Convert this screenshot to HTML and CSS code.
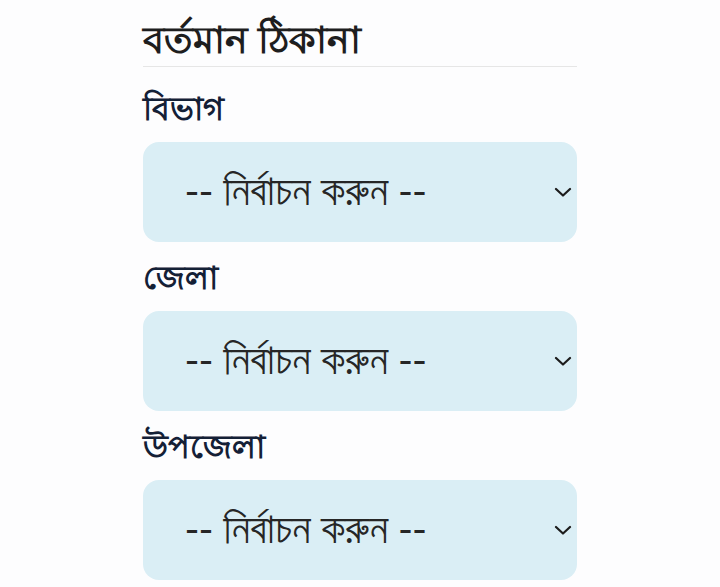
FILE: index.html
```html
<!DOCTYPE html>
<html lang="bn">
<head>
    <meta charset="UTF-8">
    <meta name="viewport" content="width=device-width, initial-scale=1.0">
    <title>বর্তমান ঠিকানা</title>
    <link rel="stylesheet" href="styles.css">
</head>
<body>

<div class="container">
    <!-- Present Address -->
    <h2 class="section-title">বর্তমান ঠিকানা</h2>

    <div class="field">
        <label for="division">বিভাগ</label>
        <div class="select-wrap">
            <select id="division">
                <option>-- নির্বাচন করুন --</option>
            </select>
            <svg class="chevron" viewBox="0 0 18 10" width="18" height="10"><path d="M2 2l7 6.5 7-6.5" fill="none" stroke="#1c1c1c" stroke-width="2.2" stroke-linecap="round" stroke-linejoin="round"/></svg>
        </div>
    </div>

    <div class="field">
        <label for="district">জেলা</label>
        <div class="select-wrap">
            <select id="district">
                <option>-- নির্বাচন করুন --</option>
            </select>
            <svg class="chevron" viewBox="0 0 18 10" width="18" height="10"><path d="M2 2l7 6.5 7-6.5" fill="none" stroke="#1c1c1c" stroke-width="2.2" stroke-linecap="round" stroke-linejoin="round"/></svg>
        </div>
    </div>

    <div class="field">
        <label for="upazila">উপজেলা</label>
        <div class="select-wrap">
            <select id="upazila">
                <option>-- নির্বাচন করুন --</option>
            </select>
            <svg class="chevron" viewBox="0 0 18 10" width="18" height="10"><path d="M2 2l7 6.5 7-6.5" fill="none" stroke="#1c1c1c" stroke-width="2.2" stroke-linecap="round" stroke-linejoin="round"/></svg>
        </div>
    </div>
</div>

</body>
</html>
```

FILE: styles.css
```css
/* General Page Styling */
body {
    margin: 0;
    background: #fdfdfe;
    font-family: "Noto Sans", sans-serif;
}

.container {
    width: 434px;
    margin: 0 auto;
    padding-top: 14px;
}

/* Section Heading */
.section-title {
    margin: 0;
    padding-bottom: 4px;
    font-size: 38px;
    font-weight: 800;
    color: #1e1e1e;
    border-bottom: 1px solid #e6e6e6;
    line-height: 48px;
}

/* Fields */
.field {
    margin-top: 10px;
}

.field:first-of-type {
    margin-top: 16px;
}

.field label {
    display: block;
    font-size: 32px;
    font-weight: 600;
    line-height: 50px;
    color: #142036;
    margin-bottom: 9px;
}

.select-wrap {
    position: relative;
}

.select-wrap select {
    display: block;
    width: 100%;
    height: 100px;
    padding: 0 40px 0 42px;
    border: none;
    border-radius: 16px;
    background: #daeef5;
    font-family: FreeSans, "Noto Sans", sans-serif;
    font-size: 42px;
    color: #262626;
    appearance: none;
    -webkit-appearance: none;
}

.chevron {
    position: absolute;
    right: 5px;
    top: 45px;
}
```
